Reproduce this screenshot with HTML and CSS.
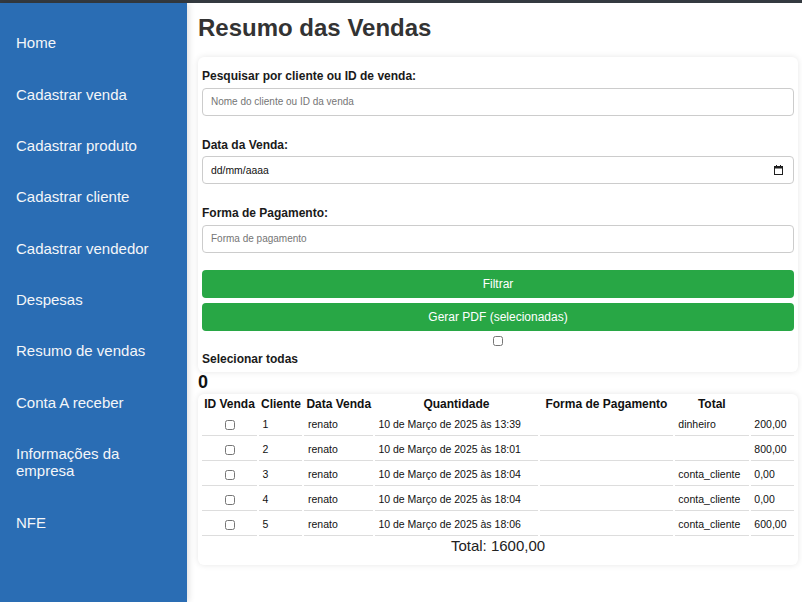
FILE: index.html
```html
<!DOCTYPE html>
<html lang="pt-BR">
<head>
<meta charset="utf-8">
<title>Resumo das Vendas</title>
<link rel="stylesheet" href="styles.css">
</head>
<body>
<div class="topbar"></div>
<div class="layout">
  <nav class="sidebar">
    <a class="nav-item" href="#">Home</a>
    <a class="nav-item" href="#">Cadastrar venda</a>
    <a class="nav-item" href="#">Cadastrar produto</a>
    <a class="nav-item" href="#">Cadastrar cliente</a>
    <a class="nav-item" href="#">Cadastrar vendedor</a>
    <a class="nav-item" href="#">Despesas</a>
    <a class="nav-item" href="#">Resumo de vendas</a>
    <a class="nav-item" href="#">Conta A receber</a>
    <a class="nav-item" href="#">Informações da empresa</a>
    <a class="nav-item" href="#">NFE</a>
  </nav>
  <main class="main">
    <h1 class="title">Resumo das Vendas</h1>
    <section class="card filters">
      <label class="field-label" for="busca">Pesquisar por cliente ou ID de venda:</label>
      <input class="field-input" id="busca" type="text" placeholder="Nome do cliente ou ID da venda">
      <label class="field-label">Data da Venda:</label>
      <div class="field-input date-field">
        <span>dd/mm/aaaa</span>
        <svg class="cal" width="9" height="10" viewBox="0 0 9 10"><path d="M2.5 0v2M6.5 0v2" stroke="#1f1f1f" stroke-width="1"/><rect x="0.5" y="1.5" width="8" height="8" fill="none" stroke="#1f1f1f"/><rect x="0.5" y="1.5" width="8" height="2" fill="#1f1f1f"/></svg>
      </div>
      <label class="field-label" for="forma">Forma de Pagamento:</label>
      <input class="field-input last" id="forma" type="text" placeholder="Forma de pagamento">
      <button class="btn" type="button">Filtrar</button>
      <button class="btn" type="button">Gerar PDF (selecionadas)</button>
      <div class="select-all"><input class="check" type="checkbox" id="todas"></div>
      <label class="field-label select-label" for="todas">Selecionar todas</label>
    </section>
    <div class="count">0</div>
    <section class="card table-card">
      <table class="sales">
        <colgroup>
          <col class="c1"><col class="c2"><col class="c3"><col class="c4"><col class="c5"><col class="c6"><col class="c7">
        </colgroup>
        <thead>
          <tr><th>ID Venda</th><th>Cliente</th><th>Data Venda</th><th>Quantidade</th><th>Forma de Pagamento</th><th>Total</th></tr>
        </thead>
        <tbody>
          <tr><td class="sel"><input class="check" type="checkbox"></td><td>1</td><td>renato</td><td>10 de Março de 2025 às 13:39</td><td></td><td>dinheiro</td><td>200,00</td></tr>
          <tr><td class="sel"><input class="check" type="checkbox"></td><td>2</td><td>renato</td><td>10 de Março de 2025 às 18:01</td><td></td><td></td><td>800,00</td></tr>
          <tr><td class="sel"><input class="check" type="checkbox"></td><td>3</td><td>renato</td><td>10 de Março de 2025 às 18:04</td><td></td><td>conta_cliente</td><td>0,00</td></tr>
          <tr><td class="sel"><input class="check" type="checkbox"></td><td>4</td><td>renato</td><td>10 de Março de 2025 às 18:04</td><td></td><td>conta_cliente</td><td>0,00</td></tr>
          <tr><td class="sel"><input class="check" type="checkbox"></td><td>5</td><td>renato</td><td>10 de Março de 2025 às 18:06</td><td></td><td>conta_cliente</td><td>600,00</td></tr>
        </tbody>
      </table>
      <div class="total">Total: 1600,00</div>
    </section>
  </main>
</div>
</body>
</html>
```
FILE: styles.css
```css
* { box-sizing: border-box; }
html, body { margin: 0; }
body {
  font-family: "Liberation Sans", Arial, sans-serif;
  background: #fff;
  color: #222;
}
.topbar { height: 3px; background: #343a40; }
.layout { display: flex; min-height: 599px; }
.sidebar {
  width: 187px;
  flex: none;
  background: #2a6db4;
  padding-top: 14px;
  display: flex;
  flex-direction: column;
  box-shadow: 2px 0 6px rgba(0, 0, 0, 0.12);
}
.nav-item {
  display: block;
  padding: 17.2px 16px;
  color: #f4f6f9;
  font-size: 15px;
  text-decoration: none;
}
.main { flex: 1; min-width: 0; padding: 0 4px 0 11px; }
.title {
  font-size: 24px;
  font-weight: bold;
  color: #333;
  margin: 11px 0 15.4px;
}
.card {
  background: #fff;
  border-radius: 6px;
  box-shadow: 0 0 6px rgba(0, 0, 0, 0.1);
}
.filters {
  display: flex;
  flex-direction: column;
  padding: 12px 4px 5.5px;
}
.field-label {
  font-size: 12px;
  font-weight: bold;
  color: #1a1a1a;
  margin-bottom: 4.2px;
}
.field-input {
  height: 28px;
  border: 1px solid #ccc;
  border-radius: 4px;
  padding: 0 8px;
  font: 10px "Liberation Sans", Arial, sans-serif;
  color: #111;
  background: #fff;
  margin: 0 0 22.3px;
}
.field-input::placeholder { color: #757575; }
.field-input.last { margin-bottom: 17.4px; }
.date-field {
  display: flex;
  align-items: center;
  justify-content: space-between;
  font-size: 10.4px;
  padding-right: 10px;
}
.cal { display: block; }
.btn {
  height: 28px;
  border: 0;
  border-radius: 4px;
  background: #28a745;
  color: #fff;
  font: 12px "Liberation Sans", Arial, sans-serif;
  margin: 0 0 5px;
}
.select-all { display: flex; justify-content: center; margin-bottom: 6.4px; }
.check { width: 10px; height: 10px; margin: 0; vertical-align: middle; }
.select-label { margin-bottom: 0; }
.count { font-size: 18px; font-weight: bold; color: #111; }
.table-card { margin-top: 1px; padding: 0 2px 11.5px; }
.sales { width: 100%; table-layout: fixed; border-spacing: 2px; }
.c1 { width: 55px; }
.c2 { width: 43.4px; }
.c3 { width: 68.4px; }
.c4 { width: 163.3px; }
.c5 { width: 132.7px; }
.c6 { width: 74px; }
.sales th {
  font-size: 12px;
  font-weight: bold;
  color: #111;
  padding: 1px 2px 0;
  white-space: nowrap;
}
.sales td {
  font-size: 10.5px;
  line-height: 12px;
  color: #111;
  padding: 4.9px 3.6px;
  border-bottom: 1px solid #ddd;
  white-space: nowrap;
}
.sales td.sel { text-align: center; }
.total { text-align: center; font-size: 15px; color: #222; margin-top: -1px; }
```
